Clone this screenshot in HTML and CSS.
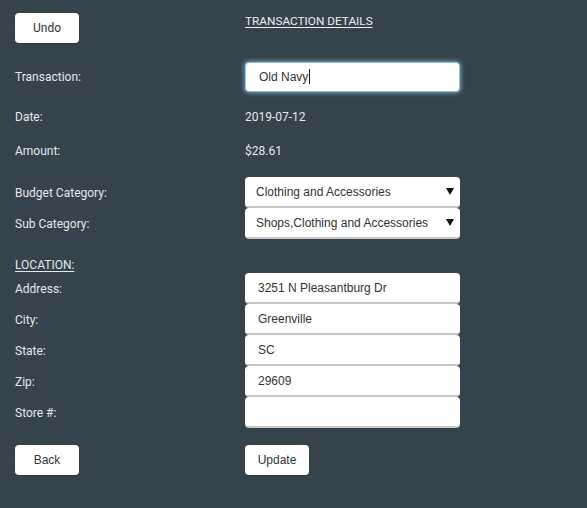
FILE: index.html
```html
<!DOCTYPE html>
<html>
<head>
<meta charset="utf-8">
<link rel="stylesheet" href="styles.css">
</head>
<body>
<div class="page">
  <div class="row row-head">
    <div><button class="btn btn-roboto">Undo</button></div>
    <div class="heading">TRANSACTION DETAILS</div>
  </div>
  <div class="row row-field row-trans">
    <div class="label">Transaction:</div>
    <div class="input focused">Old Navy<span class="caret"></span></div>
  </div>
  <div class="row row-text row-date">
    <div class="label">Date:</div>
    <div class="value">2019-07-12</div>
  </div>
  <div class="row row-text row-amount">
    <div class="label">Amount:</div>
    <div class="value">$28.61</div>
  </div>
  <div class="row row-field row-budget">
    <div class="label">Budget Category:</div>
    <div class="input select"><span>Clothing and Accessories</span><span class="arrow"></span></div>
  </div>
  <div class="row row-field row-stack">
    <div class="label">Sub Category:</div>
    <div class="input select"><span>Shops,Clothing and Accessories</span><span class="arrow"></span></div>
  </div>
  <div class="row row-loc">
    <div class="label underline">LOCATION:</div>
    <div></div>
  </div>
  <div class="row row-field">
    <div class="label">Address:</div>
    <div class="input">3251 N Pleasantburg Dr</div>
  </div>
  <div class="row row-field row-stack">
    <div class="label">City:</div>
    <div class="input">Greenville</div>
  </div>
  <div class="row row-field row-stack">
    <div class="label">State:</div>
    <div class="input">SC</div>
  </div>
  <div class="row row-field row-stack">
    <div class="label">Zip:</div>
    <div class="input">29609</div>
  </div>
  <div class="row row-field row-stack">
    <div class="label">Store #:</div>
    <div class="input"></div>
  </div>
  <div class="row row-buttons">
    <div><button class="btn">Back</button></div>
    <div><button class="btn">Update</button></div>
  </div>
</div>
</body>
</html>
```
FILE: styles.css
```css
html, body {
  margin: 0;
  padding: 0;
  background: #36434b;
  height: 100%;
}
body {
  font-family: Roboto, "Liberation Sans", Arial, sans-serif;
  color: #e6e9eb;
  font-size: 12px;
}
.page {
  padding: 13px 15px 0 15px;
}
.row {
  display: grid;
  grid-template-columns: 230px 215px;
  align-items: center;
}
.row-head {
  height: 30px;
  align-items: start;
}
.heading {
  text-decoration: underline;
  text-underline-offset: 2px;
  padding-top: 1px;
  color: #e9eef0;
  font-size: 11.8px;
}
.btn {
  width: 64px;
  height: 30px;
  background: #fff;
  border: none;
  border-radius: 4px;
  font-family: "Liberation Sans", Arial, sans-serif;
  font-size: 12px;
  color: #333;
  padding: 0;
  box-shadow: 0 1px 1px rgba(0,0,0,0.15);
}
.btn-roboto {
  font-family: Roboto, sans-serif;
}
.row-field {
  height: 31px;
}
.row-trans {
  margin-top: 18px;
  height: 31px;
}
.row-text {
  height: 20px;
}
.row-date {
  margin-top: 15px;
}
.row-amount {
  margin-top: 14px;
}
.row-budget {
  margin-top: 16px;
}
.row-stack {
  margin-top: 0;
}
.row-loc {
  height: 17px;
  margin-top: 17px;
}
.row-buttons {
  margin-top: 16px;
  height: 31px;
}
.label {
  color: #e3e7ea;
}
.underline {
  text-decoration: underline;
  text-underline-offset: 2px;
}
.value {
  color: #e6e9eb;
}
.input {
  box-sizing: border-box;
  height: 31px;
  background: #fff;
  border-radius: 4px;
  border-bottom: 2px solid #c8c8c8;
  font-family: "Liberation Sans", Arial, sans-serif;
  font-size: 12px;
  color: #333;
  padding: 0 13px;
  display: flex;
  align-items: center;
  white-space: nowrap;
}
.focused {
  border: 1px solid #8ec4e6;
  box-shadow: 0 0 4px 1px rgba(140, 200, 240, 0.7);
  height: 30px;
}
.caret {
  display: inline-block;
  width: 1px;
  height: 15px;
  background: #222;
  margin-left: 1px;
}
.select {
  justify-content: space-between;
  padding: 0 6px 0 11px;
}
.arrow {
  width: 0;
  height: 0;
  border-left: 4.5px solid transparent;
  border-right: 4.5px solid transparent;
  border-top: 7px solid #111;
}
```
